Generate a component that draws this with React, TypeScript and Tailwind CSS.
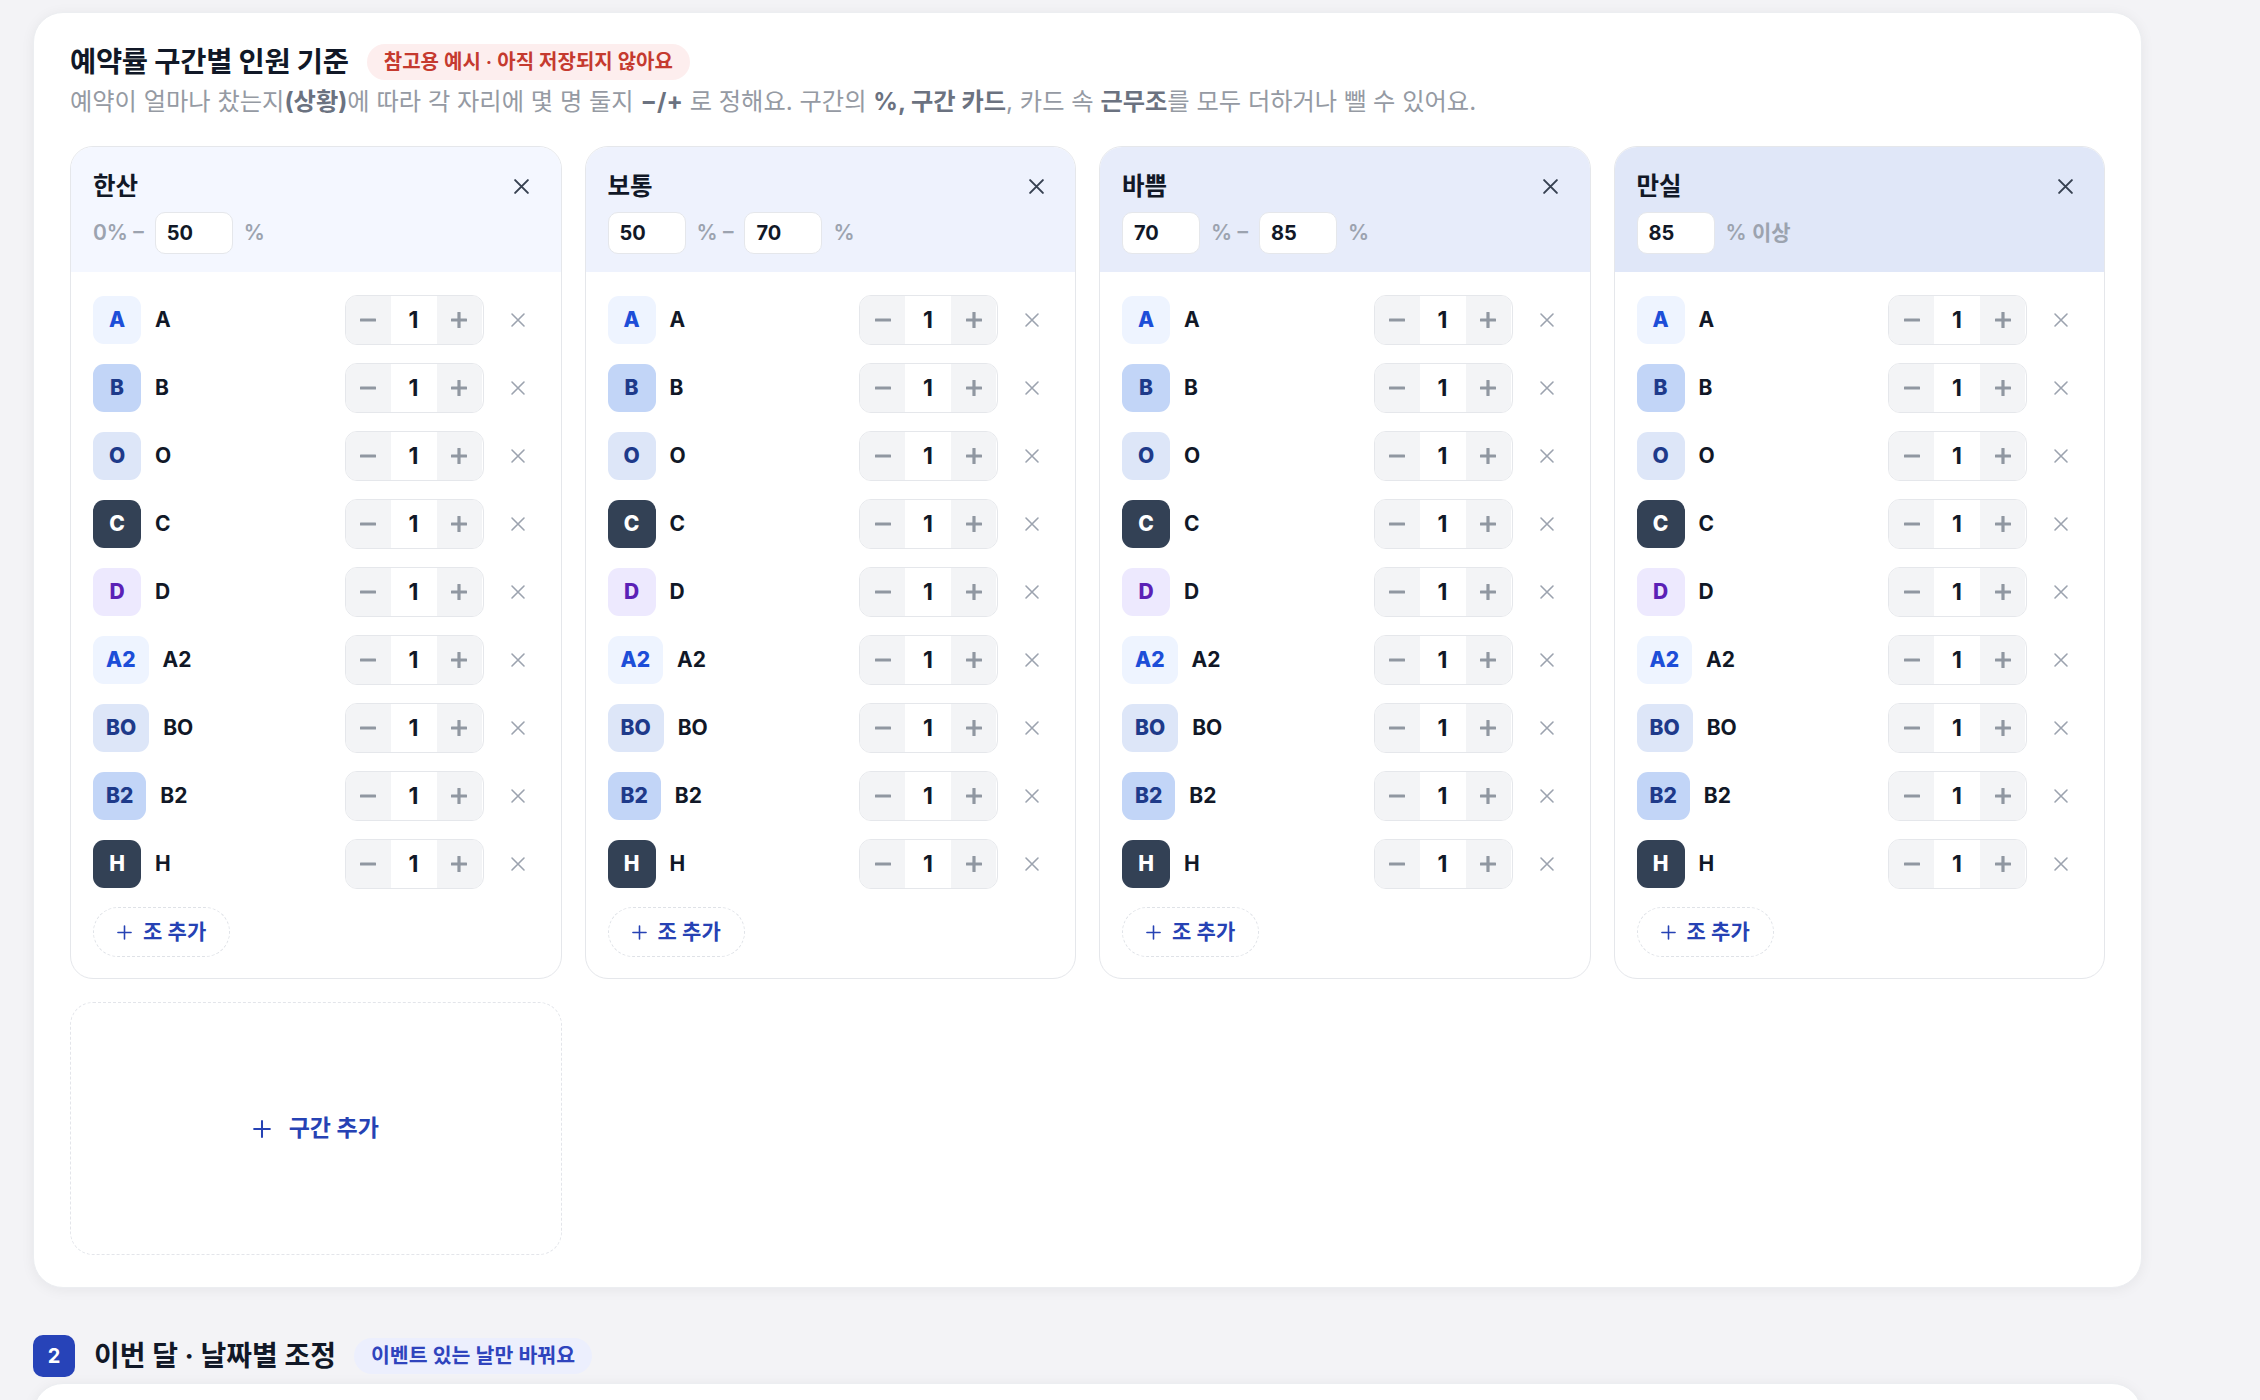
import React from "react";

type Shift = { code: string; bg: string; fg: string };

const SHIFTS: Shift[] = [
  { code: "A", bg: "bg-[#eef4ff]", fg: "text-[#1d4ed8]" },
  { code: "B", bg: "bg-[#c2d5f7]", fg: "text-[#1e3a8a]" },
  { code: "O", bg: "bg-[#dde6f8]", fg: "text-[#1e3a8a]" },
  { code: "C", bg: "bg-[#334155]", fg: "text-white" },
  { code: "D", bg: "bg-[#ede9fe]", fg: "text-[#5b21b6]" },
  { code: "A2", bg: "bg-[#eef4ff]", fg: "text-[#1d4ed8]" },
  { code: "BO", bg: "bg-[#dde6f8]", fg: "text-[#1e3a8a]" },
  { code: "B2", bg: "bg-[#c2d5f7]", fg: "text-[#1e3a8a]" },
  { code: "H", bg: "bg-[#334155]", fg: "text-white" },
];

const XIcon = ({ size, stroke, color }: { size: number; stroke: number; color: string }) => (
  <svg width={size} height={size} viewBox="0 0 16 16" fill="none">
    <path d="M2 2 L14 14 M14 2 L2 14" stroke={color} strokeWidth={stroke} strokeLinecap="round" />
  </svg>
);

const PlusIcon = ({ size, stroke, color }: { size: number; stroke: number; color: string }) => (
  <svg width={size} height={size} viewBox="0 0 16 16" fill="none">
    <path d="M8 1 V15 M1 8 H15" stroke={color} strokeWidth={stroke} strokeLinecap="round" />
  </svg>
);

function NumInput({ value }: { value: string }) {
  return (
    <div className="w-[78px] h-[42px] rounded-[10px] border-[1.5px] border-[#e5e7eb] bg-white flex items-center pl-[11px] text-[20px] font-bold text-[#111827]">
      {value}
    </div>
  );
}

function Stepper() {
  return (
    <div className="flex h-[50px] w-[139px] rounded-[12px] border-[1.5px] border-[#e5e7eb] overflow-hidden">
      <div className="w-[45px] bg-[#f3f4f6] flex items-center justify-center">
        <svg width="16" height="4" viewBox="0 0 16 4">
          <rect x="0" y="0.4" width="16" height="3.2" rx="0.6" fill="#9097a1" />
        </svg>
      </div>
      <div className="w-[46px] bg-white flex items-center justify-center text-[23px] font-bold text-[#111827]">1</div>
      <div className="w-[45px] bg-[#f3f4f6] flex items-center justify-center">
        <svg width="16" height="16" viewBox="0 0 16 16">
          <rect x="0" y="6.4" width="16" height="3.2" rx="0.6" fill="#9097a1" />
          <rect x="6.4" y="0" width="3.2" height="16" rx="0.6" fill="#9097a1" />
        </svg>
      </div>
    </div>
  );
}

function ShiftRow({ s }: { s: Shift }) {
  return (
    <div className="flex items-center h-[50px]">
      <div
        className={`${s.bg} ${s.fg} min-w-[48px] h-[48px] px-[13px] rounded-[11px] flex items-center justify-center text-[21px] font-extrabold`}
      >
        {s.code}
      </div>
      <div className="ml-[14px] flex-1 text-[21px] font-bold text-[#111827]">{s.code}</div>
      <Stepper />
      <button className="ml-[17px] w-[34px] h-[34px] flex items-center justify-center">
        <XIcon size={16} stroke={1.6} color="#9ca3af" />
      </button>
    </div>
  );
}

type Zone = { name: string; headerBg: string; range: React.ReactNode };

function ZoneCard({ z }: { z: Zone }) {
  return (
    <div className="rounded-[23px] border-[1.5px] border-[#e5e7eb] bg-white overflow-hidden flex flex-col">
      <div className={`${z.headerBg} pl-[22px] pr-[22px] pt-[22px] pb-[18px]`}>
        <div className="flex items-center justify-between h-[34px]">
          <div className="text-[24.5px] font-bold text-[#111827]">{z.name}</div>
          <button className="w-[34px] h-[34px] flex items-center justify-center">
            <XIcon size={17} stroke={1.9} color="#374151" />
          </button>
        </div>
        <div className="mt-[9px] flex items-center gap-[11px] text-[21px] font-semibold text-[#9ca3af]">{z.range}</div>
      </div>
      <div className="pl-[22px] pr-[26px] pt-[23px] pb-[21px] flex flex-col gap-[18px]">
        {SHIFTS.map((s) => (
          <ShiftRow key={s.code} s={s} />
        ))}
        <div>
          <button className="h-[50px] px-[23px] rounded-full border-[1.5px] border-dashed border-[#dfe2e7] flex items-center gap-[11px] text-[21px] font-semibold text-[#2642b4]">
            <PlusIcon size={15} stroke={1.7} color="#2642b4" />
            <span>조 추가</span>
          </button>
        </div>
      </div>
    </div>
  );
}

export default function App() {
  const zones: Zone[] = [
    {
      name: "한산",
      headerBg: "bg-[#f4f7ff]",
      range: (
        <>
          <span>0% –</span>
          <NumInput value="50" />
          <span>%</span>
        </>
      ),
    },
    {
      name: "보통",
      headerBg: "bg-[#eef2fd]",
      range: (
        <>
          <NumInput value="50" />
          <span>% –</span>
          <NumInput value="70" />
          <span>%</span>
        </>
      ),
    },
    {
      name: "바쁨",
      headerBg: "bg-[#e7ecfa]",
      range: (
        <>
          <NumInput value="70" />
          <span>% –</span>
          <NumInput value="85" />
          <span>%</span>
        </>
      ),
    },
    {
      name: "만실",
      headerBg: "bg-[#e0e7f8]",
      range: (
        <>
          <NumInput value="85" />
          <span>% 이상</span>
        </>
      ),
    },
  ];

  return (
    <div
      className="min-h-[1400px] bg-[#f3f3f6] pl-[33px] pr-[118px] pt-[12px] pb-[40px]"
      style={{ fontFamily: 'Inter, "Noto Sans CJK KR", sans-serif' }}
    >
      <div className="rounded-[30px] bg-white border border-[#eceef1] shadow-[0_2px_14px_rgba(15,23,42,0.06)] px-[36px] pt-[29px] pb-[32px]">
        <div className="flex items-center h-[40px]">
          <h2 className="text-[28.5px] font-bold text-[#111827] tracking-[-0.01em]">예약률 구간별 인원 기준</h2>
          <span className="ml-[18px] h-[36px] px-[17px] rounded-full bg-[#fdeeee] text-[#c53a2f] text-[20px] font-semibold flex items-center">
            참고용 예시 · 아직 저장되지 않아요
          </span>
        </div>
        <p className="mt-[4px] text-[24.25px] leading-[32px] text-[#959aa3]">
          예약이 얼마나 찼는지<b className="font-bold text-[#6b7280]">(상황)</b>에 따라 각 자리에 몇 명 둘지{" "}
          <b className="font-bold text-[#6b7280]">−/+</b> 로 정해요. 구간의{" "}
          <b className="font-bold text-[#6b7280]">%, 구간 카드</b>, 카드 속{" "}
          <b className="font-bold text-[#6b7280]">근무조</b>를 모두 더하거나 뺄 수 있어요.
        </p>
        <div className="mt-[28px] grid grid-cols-4 gap-[23px] items-start">
          {zones.map((z) => (
            <ZoneCard key={z.name} z={z} />
          ))}
          <button className="h-[253px] rounded-[23px] border-[1.5px] border-dashed border-[#e3e5ea] flex items-center justify-center gap-[18px] text-[23px] font-bold text-[#2642b4]">
            <PlusIcon size={18} stroke={1.8} color="#2642b4" />
            <span>구간 추가</span>
          </button>
        </div>
      </div>

      <div className="mt-[47px] flex items-center h-[42px]">
        <div className="w-[42px] h-[42px] rounded-[10px] bg-[#2743b8] text-white text-[20px] font-bold flex items-center justify-center">
          2
        </div>
        <h2 className="ml-[19px] text-[28px] font-bold text-[#111827]">이번 달 · 날짜별 조정</h2>
        <span className="ml-[18px] h-[36px] px-[17px] rounded-full bg-[#eceffd] text-[#2f44bd] text-[20.5px] font-semibold flex items-center">
          이벤트 있는 날만 바꿔요
        </span>
      </div>
      <div className="mt-[6px] h-[200px] rounded-[30px] bg-white border border-[#eceef1] shadow-[0_2px_14px_rgba(15,23,42,0.06)]" />
    </div>
  );
}
